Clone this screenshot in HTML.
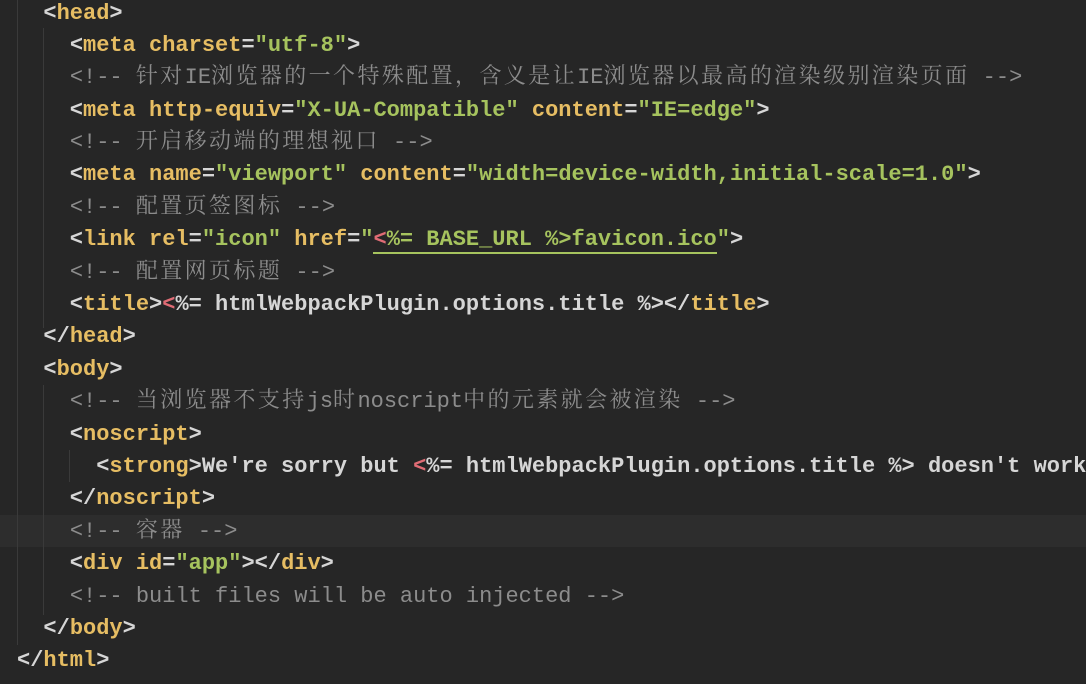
<!DOCTYPE html>
<html><head><meta charset="utf-8"><style>
body{margin:0;background:#262626;width:1086px;height:684px;overflow:hidden;position:relative;font-family:"Liberation Mono","Noto Sans CJK SC",monospace;font-size:22px;font-weight:bold;color:#d6d6d6}
#code{position:absolute;left:17px;top:-2.5px;white-space:pre;line-height:32.4px}
.l{height:32.4px;overflow:visible}
.t{color:#e6bd63}.a{color:#e6bd63}.s{color:#a6c35e}.c{color:#8c8c8c;font-weight:normal}.p{color:#d6d6d6}.e{color:#e06c75}
.k{letter-spacing:2.4px;font-family:"Noto Serif CJK SC","Noto Sans CJK SC",serif;line-height:0}
.g{position:absolute;width:1px;background:#3a3a3a}
.hl{position:absolute;left:0;right:0;top:515px;height:32px;background:#2d2d2d}
.u{border-bottom:2px solid #a6c35e}
</style></head><body>
<div class="hl"></div>
<div class="g" style="left:17px;top:0;height:645px"></div>
<div class="g" style="left:43px;top:28px;height:300px"></div>
<div class="g" style="left:43px;top:385px;height:230px"></div>
<div class="g" style="left:69px;top:450px;height:32px"></div>
<div id="code"><div class="l">  <span class="p">&lt;</span><span class="t">head</span><span class="p">&gt;</span></div><div class="l">    <span class="p">&lt;</span><span class="t">meta</span> <span class="a">charset</span>=<span class="s">"utf-8"</span>&gt;</div><div class="l">    <span class="c">&lt;!-- <span class="k">针对</span>IE<span class="k">浏览器的一个特殊配置，含义是让</span>IE<span class="k">浏览器以最高的渲染级别渲染页面</span> --&gt;</span></div><div class="l">    &lt;<span class="t">meta</span> <span class="a">http-equiv</span>=<span class="s">"X-UA-Compatible"</span> <span class="a">content</span>=<span class="s">"IE=edge"</span>&gt;</div><div class="l">    <span class="c">&lt;!-- <span class="k">开启移动端的理想视口</span> --&gt;</span></div><div class="l">    &lt;<span class="t">meta</span> <span class="a">name</span>=<span class="s">"viewport"</span> <span class="a">content</span>=<span class="s">"width=device-width,initial-scale=1.0"</span>&gt;</div><div class="l">    <span class="c">&lt;!-- <span class="k">配置页签图标</span> --&gt;</span></div><div class="l">    &lt;<span class="t">link</span> <span class="a">rel</span>=<span class="s">"icon"</span> <span class="a">href</span>=<span class="s">"<span class="u"><span class="e">&lt;</span>%= BASE_URL %&gt;favicon.ico</span>"</span>&gt;</div><div class="l">    <span class="c">&lt;!-- <span class="k">配置网页标题</span> --&gt;</span></div><div class="l">    &lt;<span class="t">title</span>&gt;<span class="e">&lt;</span>%= htmlWebpackPlugin.options.title %&gt;&lt;/<span class="t">title</span>&gt;</div><div class="l">  &lt;/<span class="t">head</span>&gt;</div><div class="l">  &lt;<span class="t">body</span>&gt;</div><div class="l">    <span class="c">&lt;!-- <span class="k">当浏览器不支持</span>js<span class="k">时</span>noscript<span class="k">中的元素就会被渲染</span> --&gt;</span></div><div class="l">    &lt;<span class="t">noscript</span>&gt;</div><div class="l">      &lt;<span class="t">strong</span>&gt;We're sorry but <span class="e">&lt;</span>%= htmlWebpackPlugin.options.title %&gt; doesn't work</div><div class="l">    &lt;/<span class="t">noscript</span>&gt;</div><div class="l">    <span class="c">&lt;!-- <span class="k">容器</span> --&gt;</span></div><div class="l">    &lt;<span class="t">div</span> <span class="a">id</span>=<span class="s">"app"</span>&gt;&lt;/<span class="t">div</span>&gt;</div><div class="l">    <span class="c">&lt;!-- built files will be auto injected --&gt;</span></div><div class="l">  &lt;/<span class="t">body</span>&gt;</div><div class="l">&lt;/<span class="t">html</span>&gt;</div></div>
</body></html>
